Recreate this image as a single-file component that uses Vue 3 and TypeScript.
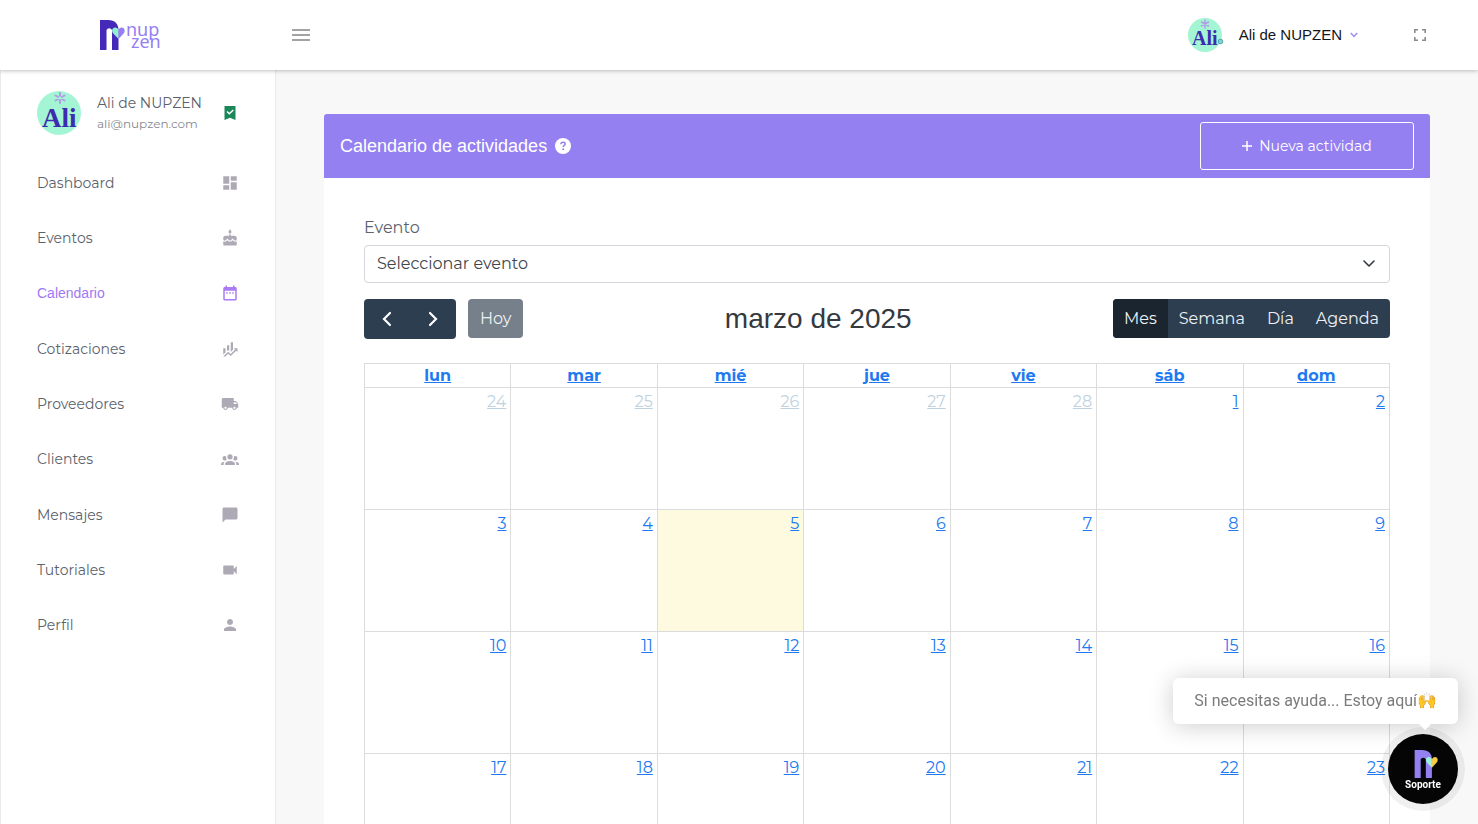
<script setup lang="ts">
interface NavItem {
  label: string
  icon: string
  active?: boolean
}

const navItems: NavItem[] = [
  { label: 'Dashboard', icon: 'M13 3v6h8V3zM13 21h8V11h-8zM3 21h8v-6H3zM3 13h8V3H3z' },
  {
    label: 'Eventos',
    icon: 'M12 6c1.11 0 2-.9 2-2 0-.38-.1-.73-.29-1.03L12 0l-1.71 2.97c-.19.3-.29.65-.29 1.03 0 1.1.9 2 2 2zm4.6 9.99l-1.07-1.07-1.08 1.07c-1.3 1.3-3.58 1.31-4.89 0l-1.07-1.07-1.09 1.07C6.75 16.64 5.88 17 4.96 17c-.73 0-1.4-.23-1.96-.61V21c0 .55.45 1 1 1h16c.55 0 1-.45 1-1v-4.61c-.56.38-1.23.61-1.96.61-.92 0-1.79-.36-2.44-1.01zM18 9h-5V7h-2v2H6c-1.66 0-3 1.34-3 3v1.54c0 1.08.88 1.96 1.96 1.96.52 0 1.02-.2 1.38-.57l2.14-2.13 2.13 2.13c.74.74 2.03.74 2.77 0l2.14-2.13 2.13 2.13c.37.37.86.57 1.38.57 1.08 0 1.96-.88 1.96-1.96V12c.01-1.66-1.33-3-2.99-3z',
  },
  {
    label: 'Calendario',
    active: true,
    icon: 'M9 11H7v2h2v-2zm4 0h-2v2h2v-2zm4 0h-2v2h2v-2zm2-7h-1V2h-2v2H8V2H6v2H5c-1.11 0-1.99.9-1.99 2L3 20c0 1.1.89 2 2 2h14c1.1 0 2-.9 2-2V6c0-1.1-.9-2-2-2zm0 16H5V9h14v11z',
  },
  {
    label: 'Cotizaciones',
    icon: 'M6 16.5L3 19.44V11h3zM11 14.66l-1.57-1.34L8 14.64V7h3zM16 13l-3 3V3h3zM18.81 12.81L17 11h5v5l-1.79-1.79L13 21.36l-3.47-3.02L5.75 22H3l6.47-6.34L13 18.64z',
  },
  {
    label: 'Proveedores',
    icon: 'M20 8h-3V4H3c-1.1 0-2 .9-2 2v11h2c0 1.66 1.34 3 3 3s3-1.34 3-3h6c0 1.66 1.34 3 3 3s3-1.34 3-3h2v-5l-3-4zM6 18.5c-.83 0-1.5-.67-1.5-1.5s.67-1.5 1.5-1.5 1.5.67 1.5 1.5-.67 1.5-1.5 1.5zm13.5-9l1.96 2.5H17V9.5h2.5zm-1.5 9c-.83 0-1.5-.67-1.5-1.5s.67-1.5 1.5-1.5 1.5.67 1.5 1.5-.67 1.5-1.5 1.5z',
  },
  {
    label: 'Clientes',
    icon: 'M12,5.5A3.5,3.5 0 0,1 15.5,9A3.5,3.5 0 0,1 12,12.5A3.5,3.5 0 0,1 8.5,9A3.5,3.5 0 0,1 12,5.5M5,8C5.56,8 6.08,8.15 6.53,8.42C6.38,9.85 6.8,11.27 7.66,12.38C7.16,13.34 6.16,14 5,14A3,3 0 0,1 2,11A3,3 0 0,1 5,8M19,8A3,3 0 0,1 22,11A3,3 0 0,1 19,14C17.84,14 16.84,13.34 16.34,12.38C17.2,11.27 17.62,9.85 17.47,8.42C17.92,8.15 18.44,8 19,8M5.5,18.25C5.5,16.18 8.41,14.5 12,14.5C15.59,14.5 18.5,16.18 18.5,18.25V20H5.5V18.25M0,20V18.5C0,17.11 1.89,15.94 4.45,15.6C3.86,16.28 3.5,17.22 3.5,18.25V20H0M24,20H20.5V18.25C20.5,17.22 20.14,16.28 19.55,15.6C22.11,15.94 24,17.11 24,18.5V20Z',
  },
  { label: 'Mensajes', icon: 'M20 2H4c-1.1 0-2 .9-2 2v18l4-4h14c1.1 0 2-.9 2-2V4c0-1.1-.9-2-2-2z' },
  {
    label: 'Tutoriales',
    icon: 'M17 10.5V7c0-.55-.45-1-1-1H4c-.55 0-1 .45-1 1v10c0 .55.45 1 1 1h12c.55 0 1-.45 1-1v-3.5l4 4v-11l-4 4z',
  },
  {
    label: 'Perfil',
    icon: 'M12 12c2.21 0 4-1.79 4-4s-1.79-4-4-4-4 1.79-4 4 1.79 4 4 4zm0 2c-2.67 0-8 1.34-8 4v2h16v-2c0-2.66-5.33-4-8-4z',
  },
]

const weekdays: string[] = ['lun', 'mar', 'mié', 'jue', 'vie', 'sáb', 'dom']

const weeks: number[][] = [
  [24, 25, 26, 27, 28, 1, 2],
  [3, 4, 5, 6, 7, 8, 9],
  [10, 11, 12, 13, 14, 15, 16],
  [17, 18, 19, 20, 21, 22, 23],
]

const views: string[] = ['Mes', 'Semana', 'Día', 'Agenda']

const isOutside = (week: number, day: number): boolean => week === 0 && day > 7
const isToday = (week: number, day: number): boolean => week === 1 && day === 5
</script>

<template>
  <div class="shell">
    <header class="topbar">
      <a class="brand" href="#">
        <svg class="brand-mark" width="25" height="30" viewBox="0 0 25 30" aria-hidden="true">
          <path d="M0 0H8C15 0 18.500 4 18.500 10V30H12V10a3 3 0 0 0-5.500 0V30H0z" fill="#4529b8" />
          <path d="M18.500 19l-5-5.200c-2.800-3-1-6.300 1.700-6.300 1.700 0 2.800 1 3.300 2.500z" fill="#8ff0cf" />
          <path d="M18.500 19l4.700-5c2.800-3 1.300-6.500-1.400-6.500-1.700 0-2.800 1-3.300 2.500z" fill="#9580f2" />
        </svg>
        <span class="brand-name"><span>nup</span><span class="brand-second">zen</span></span>
      </a>
      <button class="icon-btn menu-btn" type="button" aria-label="Menú">
        <svg width="18" height="12" viewBox="0 0 18 12" aria-hidden="true">
          <path d="M0 1h18M0 6h18M0 11h18" stroke="#858585" stroke-width="1.600" />
        </svg>
      </button>
      <button class="user-btn" type="button">
        <svg width="36" height="34" viewBox="0 0 36 34" aria-hidden="true">
          <circle cx="17" cy="17" r="17" fill="#a3f5d3" />
          <g stroke="#b49be8" stroke-width="1.500" stroke-linecap="round">
            <path d="M17 2v8M13.500 4l7 4M20.500 4l-7 4" />
          </g>
          <text x="4" y="27" class="avatar-text" font-size="20">Ali</text>
          <circle cx="32.500" cy="23.500" r="2.300" fill="#7fd8cf" stroke="#3f8f9f" stroke-width=".8" />
        </svg>
        <span>Ali de NUPZEN</span>
        <svg class="user-caret" width="8" height="6" viewBox="0 0 8 6" aria-hidden="true">
          <path d="M.8 1L4 4.400 7.200 1" fill="none" stroke="#9f8cf5" stroke-width="1.500" />
        </svg>
      </button>
      <button class="icon-btn" type="button" aria-label="Pantalla completa">
        <svg width="12" height="12" viewBox="0 0 12 12" aria-hidden="true">
          <path d="M.8 4V.8H4M8 .8h3.200V4M11.200 8v3.200H8M4 11.200H.8V8" fill="none" stroke="#8a8a8a" stroke-width="1.600" />
        </svg>
      </button>
    </header>

    <aside class="sidebar">
      <div class="profile">
        <svg width="44" height="44" viewBox="0 0 44 44" aria-hidden="true">
          <circle cx="22" cy="22" r="22" fill="#a3f5d3" />
          <g stroke="#b49be8" stroke-width="2" stroke-linecap="round">
            <path d="M23 2v10M18.500 4.500l9 5M27.500 4.500l-9 5" />
          </g>
          <circle cx="23" cy="7" r="1.400" fill="#a3f5d3" />
          <text x="5" y="36" class="avatar-text" font-size="27">Ali</text>
        </svg>
        <div class="profile-text">
          <div class="profile-name">Ali de NUPZEN</div>
          <div class="profile-mail">ali@nupzen.com</div>
        </div>
        <svg width="18" height="16" viewBox="0 0 18 16" aria-hidden="true">
          <path d="M3.500 1h11v14L9 12.800 3.500 15z" fill="#19875a" />
          <path d="M6 6.500l2.300 2.300L12.300 5" fill="none" stroke="#fff" stroke-width="1.500" />
        </svg>
      </div>
      <nav>
        <ul class="nav-list">
          <li v-for="item in navItems" :key="item.label">
            <a href="#" class="nav-link" :class="{ active: item.active }">
              <span>{{ item.label }}</span>
              <svg width="18" height="18" viewBox="0 0 24 24" aria-hidden="true">
                <path :d="item.icon" fill="currentColor" />
              </svg>
            </a>
          </li>
        </ul>
      </nav>
    </aside>

    <main class="content">
      <section class="card">
        <div class="card-head">
          <h1>Calendario de actividades</h1>
          <svg width="16" height="16" viewBox="0 0 16 16" aria-hidden="true">
            <circle cx="8" cy="8" r="8" fill="#fff" />
            <path d="M5.900 6.300c0-1.200.9-2 2.200-2s2.100.7 2.100 1.700c0 1.400-2 1.400-2 2.900" fill="none" stroke="#9580f2" stroke-width="1.500" />
            <circle cx="8.200" cy="11.300" r="1" fill="#9580f2" />
          </svg>
          <button class="new-btn" type="button">
            <svg width="10" height="10" viewBox="0 0 10 10" aria-hidden="true">
              <path d="M5 0v10M0 5h10" stroke="#fff" stroke-width="1.500" />
            </svg>
            Nueva actividad
          </button>
        </div>

        <div class="card-body">
          <label class="field-label" for="event-select">Evento</label>
          <div class="select-wrap">
            <select id="event-select">
              <option>Seleccionar evento</option>
            </select>
            <svg class="select-caret" width="12" height="8" viewBox="0 0 12 8" aria-hidden="true">
              <path d="M1 1l5 5 5-5" fill="none" stroke="#343a40" stroke-width="1.600" stroke-linecap="round" stroke-linejoin="round" />
            </svg>
          </div>

          <div class="toolbar">
            <div class="toolbar-left">
              <div class="btn-group arrows">
                <button class="arrow-btn" type="button" aria-label="Anterior">
                  <svg width="10" height="16" viewBox="0 0 10 16" aria-hidden="true">
                    <path d="M8 2L2 8l6 6" fill="none" stroke="#fff" stroke-width="2.200" stroke-linecap="round" />
                  </svg>
                </button>
                <button class="arrow-btn" type="button" aria-label="Siguiente">
                  <svg width="10" height="16" viewBox="0 0 10 16" aria-hidden="true">
                    <path d="M2 2l6 6-6 6" fill="none" stroke="#fff" stroke-width="2.200" stroke-linecap="round" />
                  </svg>
                </button>
              </div>
              <button class="today-btn" type="button">Hoy</button>
            </div>
            <h2>marzo de 2025</h2>
            <div class="btn-group">
              <button
                v-for="(view, i) in views"
                :key="view"
                class="view-btn"
                :class="{ selected: i === 0 }"
                type="button"
              >
                {{ view }}
              </button>
            </div>
          </div>

          <table class="calendar">
            <thead>
              <tr>
                <th v-for="name in weekdays" :key="name" scope="col"><a href="#">{{ name }}</a></th>
              </tr>
            </thead>
            <tbody>
              <tr v-for="(week, w) in weeks" :key="w">
                <td
                  v-for="day in week"
                  :key="day"
                  :class="{ outside: isOutside(w, day), today: isToday(w, day) }"
                >
                  <a href="#">{{ day }}</a>
                </td>
              </tr>
            </tbody>
          </table>
        </div>
      </section>
    </main>

    <div class="support">
      <div class="bubble">Si necesitas ayuda... Estoy aquí<span class="emoji">🙌</span></div>
      <button class="support-btn" type="button">
        <svg width="29" height="28" viewBox="-6 0 31 30" aria-hidden="true">
          <path d="M0 0H8C15 0 18.500 4 18.500 10V30H12V10a3 3 0 0 0-5.500 0V30H0z" fill="#9580f2" />
          <path d="M18.500 19l-5-5.200c-2.800-3-1-6.300 1.700-6.300 1.700 0 2.800 1 3.300 2.500z" fill="#9df0dc" />
          <path d="M18.500 19l4.700-5c2.800-3 1.300-6.500-1.400-6.500-1.700 0-2.800 1-3.300 2.500z" fill="#f7c948" />
        </svg>
        <span>Soporte</span>
      </button>
    </div>
  </div>
</template>

<style>
body {
  background: #f8f8f8;
}
</style>

<style scoped>
.shell {
  --sans: Montserrat, Inter, 'Open Sans', sans-serif;
  --arial: 'Liberation Sans', Arial, sans-serif;
  display: grid;
  grid-template-columns: 276px minmax(0, 1fr);
  grid-template-rows: 70px minmax(0, 1fr);
  height: 100vh;
  overflow: hidden;
  font-family: var(--sans);
  color: #5b626b;
}

.shell *,
.shell *::before {
  box-sizing: border-box;
}

button {
  font: inherit;
  border: 0;
  padding: 0;
  background: none;
  color: inherit;
  cursor: pointer;
}

svg {
  display: block;
  flex: none;
}

.topbar {
  grid-column: 1 / -1;
  display: flex;
  align-items: center;
  padding-right: 52px;
  background: #fff;
  box-shadow: 0 1px 4px rgba(0, 0, 0, 0.25);
  z-index: 2;
}

.brand {
  display: flex;
  width: 292px;
  padding-left: 100px;
  text-decoration: none;
}

.brand-name {
  display: flex;
  flex-direction: column;
  font: 18px/12px 'Noto Sans', sans-serif;
  color: #9580f2;
  padding: 3px 0 0 1px;
}

.brand-second {
  padding-left: 5px;
}

.user-btn {
  display: flex;
  align-items: center;
  margin-left: auto;
  margin-right: 56px;
  font: 15px/24px var(--arial);
  color: #14161a;
}

.user-btn span {
  padding-left: 15px;
}

.user-caret {
  margin-left: 8px;
}

.avatar-text {
  font-family: 'Liberation Serif', serif;
  font-weight: 700;
  fill: #3d2bb0;
}

.sidebar {
  background: #fff;
  border-left: 1px solid #e9e9e9;
  border-right: 1px solid #e9e9e9;
  padding: 21px 36px 0;
}

.profile {
  display: flex;
  align-items: center;
  margin-bottom: 20px;
}

.profile-text {
  flex: 1;
  padding-left: 16px;
}

.profile-name {
  font-size: 14px;
  line-height: 22px;
}

.profile-mail {
  font-size: 12px;
  line-height: 20px;
  color: #85898f;
}

.nav-list {
  display: grid;
  grid-auto-rows: 1fr;
  height: 498px;
  margin: 0;
  padding: 0;
  list-style: none;
}

.nav-link {
  display: flex;
  align-items: center;
  justify-content: space-between;
  height: 100%;
  font-size: 14px;
  color: #5b626b;
  text-decoration: none;
}

.nav-link svg {
  color: #aeaab5;
}

.nav-link.active {
  font-family: var(--arial);
  color: #9f78f5;
}

.nav-link.active svg {
  color: #a97bf5;
}

.content {
  overflow-y: auto;
  scrollbar-width: none;
  padding: 44px 48px 0;
}

.card {
  background: #fff;
  border-radius: 3px;
}

.card-head {
  display: flex;
  align-items: center;
  height: 64px;
  padding: 0 16px;
  border-radius: 3px 3px 0 0;
  background: #9580f2;
  color: #fff;
}

.card-head h1 {
  margin: 0 8px 0 0;
  font: 18px/22px var(--arial);
}

.new-btn {
  display: flex;
  align-items: center;
  justify-content: center;
  gap: 7px;
  width: 214px;
  height: 48px;
  margin-left: auto;
  border: 1px solid #fff;
  border-radius: 3px;
  font-size: 14px;
}

.card-body {
  padding: 38px 40px;
}

.field-label {
  display: block;
  font-size: 16px;
  line-height: 24px;
  margin-bottom: 5px;
}

.select-wrap {
  position: relative;
}

.select-wrap select {
  display: block;
  appearance: none;
  width: 100%;
  height: 38px;
  padding: 0 12px;
  border: 1px solid #d3d6da;
  border-radius: 4px;
  background: #fff;
  color: #41464d;
  font: 16px/24px var(--sans);
}

.select-caret {
  position: absolute;
  right: 15px;
  top: 15px;
  pointer-events: none;
}

.toolbar {
  display: flex;
  align-items: flex-start;
  justify-content: space-between;
  height: 40px;
  margin: 16px 0 24px;
}

.toolbar h2 {
  margin: 0;
  font: 28px/40px var(--arial);
  color: #343a40;
}

.toolbar-left {
  display: flex;
  gap: 12px;
}

.btn-group {
  display: flex;
  height: 39px;
  border-radius: 4px;
  overflow: hidden;
  background: #2c3e50;
  color: #eef1f4;
}

.btn-group.arrows {
  height: 40px;
}

.arrow-btn {
  display: grid;
  place-items: center;
  width: 46px;
}

.today-btn {
  height: 39px;
  padding: 0 12px;
  border-radius: 4px;
  background: #76808b;
  color: #eef1f4;
}

.view-btn {
  padding: 0 11px;
}

.view-btn.selected {
  background: #1a252f;
}

.calendar {
  width: 100%;
  table-layout: fixed;
  border-collapse: collapse;
  font-size: 16px;
  line-height: 23px;
}

.calendar th,
.calendar td {
  border: 1px solid #dcdcdc;
  padding: 0;
}

.calendar th {
  font-weight: 700;
  text-align: center;
}

.calendar td {
  height: 122px;
  padding: 2px 4px;
  vertical-align: top;
  text-align: right;
}

.calendar a {
  color: #2079f0;
}

.calendar .outside a {
  color: #c0d2e0;
}

.calendar .today {
  background: #fefae0;
}

.support {
  position: fixed;
  right: 20px;
  bottom: 20px;
  display: flex;
  flex-direction: column;
  align-items: flex-end;
  gap: 10px;
  z-index: 3;
}

.bubble {
  position: relative;
  display: flex;
  align-items: center;
  height: 46px;
  padding: 0 21px;
  border-radius: 6px;
  background: #fff;
  box-shadow: 0 2px 24px rgba(0, 0, 0, 0.2);
  font: 16px/24px Roboto, sans-serif;
  color: #7b7b7b;
}

.bubble::before {
  content: '';
  position: absolute;
  right: 26px;
  bottom: -6px;
  border: 7px solid transparent;
  border-top-color: #fff;
  border-bottom: 0;
}

.emoji {
  font-family: 'Noto Color Emoji', 'Noto Sans', sans-serif;
}

.support-btn {
  display: flex;
  flex-direction: column;
  align-items: center;
  justify-content: center;
  width: 70px;
  height: 70px;
  padding-top: 3px;
  border-radius: 50%;
  background: #050505;
  box-shadow: 0 0 0 7px rgba(0, 0, 0, 0.06);
  color: #fff;
  font: 700 10px/14px Roboto, sans-serif;
}
</style>
